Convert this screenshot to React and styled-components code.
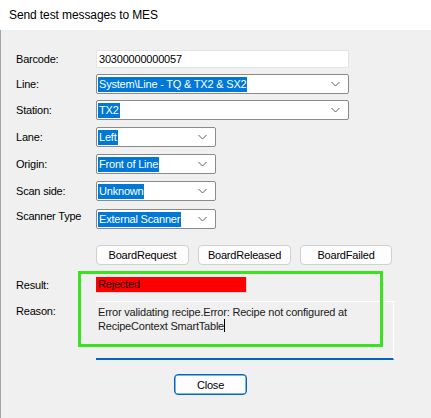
import React from 'react'
import styled, { createGlobalStyle } from 'styled-components'

const GlobalStyle = createGlobalStyle`
  html, body {
    margin: 0;
    padding: 0;
    background: #f0f0f0;
  }
  body {
    font-family: "Liberation Sans", Arial, sans-serif;
    font-size: 11px;
    letter-spacing: -0.2px;
    color: #000000;
  }
`

const Window = styled.div`
  width: 431px;
  height: 418px;
  display: flex;
  flex-direction: column;
  overflow: hidden;
`

const TitleBar = styled.div`
  height: 30px;
  flex-shrink: 0;
  background: #ffffff;
  display: flex;
  align-items: center;
  padding-left: 9px;
  font-size: 12px;
  letter-spacing: -0.1px;
  color: #000000;
`

const Body = styled.div`
  flex: 1;
  position: relative;
  background: #f0f0f0;
  border-left: 1px solid #a3a3a3;
  padding: 20px 0 0 15px;
  display: flex;
  flex-direction: column;
`

const Row = styled.div`
  display: flex;
  align-items: ${p => p.$top ? 'flex-start' : 'center'};
  margin-top: ${p => p.$gap || 0}px;
  height: ${p => p.$h}px;
`

const Label = styled.div`
  width: 80px;
  flex-shrink: 0;
  line-height: 14px;
  position: relative;
  top: ${p => p.$shift || 0}px;
`

const TextBox = styled.div`
  box-sizing: border-box;
  width: 253px;
  height: 18px;
  background: #ffffff;
  border: 1px solid #e4e4e4;
  display: flex;
  align-items: center;
  padding-left: 2px;
  line-height: 14px;
`

const Combo = styled.div`
  box-sizing: border-box;
  width: ${p => p.$w}px;
  height: 20px;
  background: #ffffff;
  border: 1px solid #8a8a8a;
  border-radius: 2px;
  display: flex;
  align-items: center;
  padding-left: 1px;
  padding-right: 8px;
  justify-content: space-between;
`

const Selected = styled.span`
  background: #0078d7;
  color: #ffffff;
  line-height: 15px;
  padding: 0 1px;
  white-space: nowrap;
`

const Chevron = () => (
  <svg width="9" height="6" viewBox="0 0 9 6">
    <path d="M0.5 1 L4.5 5 L8.5 1" fill="none" stroke="#5f5f5f" strokeWidth="1" />
  </svg>
)

const ButtonBar = styled.div`
  display: flex;
  gap: 9px;
  margin-left: 80px;
`

const Button = styled.button`
  box-sizing: border-box;
  width: ${p => p.$w || 93}px;
  height: ${p => p.$h || 20}px;
  margin-left: ${p => p.$offset || 0}px;
  background: #fdfdfd;
  border: 1px solid ${p => p.$primary ? '#0067c0' : '#d0d0d0'};
  box-shadow: ${p => p.$primary ? 'inset 0 0 0 0.5px #0067c0' : 'none'};
  border-radius: 4px;
  font-family: inherit;
  font-size: 11px;
  letter-spacing: -0.2px;
  color: #000000;
  padding: 0;
  line-height: 14px;
`

const ResultField = styled.div`
  box-sizing: border-box;
  width: 151px;
  height: 16px;
  background: #ff0000;
  border-right: 1px solid #d7d7d7;
  border-bottom: 1px solid #d7d7d7;
  padding-left: 2px;
  line-height: 15px;
  color: #1a0000;
`

const ReasonBox = styled.div`
  box-sizing: border-box;
  width: 298px;
  height: 59px;
  background: #f0f0f0;
  border-top: 1px solid #ffffff;
  border-right: 1px solid #ffffff;
  border-bottom: 2px solid #0067c0;
  padding: 4px 8px 0 2px;
  line-height: 13px;
  color: #1a1a1a;
`

const Caret = styled.span`
  display: inline-block;
  width: 1px;
  height: 13px;
  background: #000000;
  vertical-align: -2px;
`

const Highlight = styled.div`
  position: absolute;
  left: 77px;
  top: 241px;
  width: 305px;
  height: 76px;
  box-sizing: border-box;
  border: 3px solid #3ce11f;
  pointer-events: none;
`

const combos = [
  { label: 'Line:', value: 'System\\Line - TQ & TX2 & SX2', w: 253, gap: 6 },
  { label: 'Station:', value: 'TX2', w: 253, gap: 6 },
  { label: 'Lane:', value: 'Left', w: 120, gap: 7 },
  { label: 'Origin:', value: 'Front of Line', w: 120, gap: 7 },
  { label: 'Scan side:', value: 'Unknown', w: 120, gap: 7 },
  { label: 'Scanner Type', value: 'External Scanner', w: 120, gap: 8, shift: -3 }
]

export default function App () {
  return (
    <Window>
      <GlobalStyle />
      <TitleBar>Send test messages to MES</TitleBar>
      <Body>
        <Row $h={18}>
          <Label>Barcode:</Label>
          <TextBox>30300000000057</TextBox>
        </Row>
        {combos.map(c => (
          <Row key={c.label} $h={20} $gap={c.gap}>
            <Label $shift={c.shift}>{c.label}</Label>
            <Combo $w={c.w}>
              <Selected>{c.value}</Selected>
              <Chevron />
            </Combo>
          </Row>
        ))}
        <Row $h={20} $gap={16}>
          <ButtonBar>
            <Button>BoardRequest</Button>
            <Button>BoardReleased</Button>
            <Button $w={92}>BoardFailed</Button>
          </ButtonBar>
        </Row>
        <Row $h={16} $gap={12}>
          <Label>Result:</Label>
          <ResultField>Rejected</ResultField>
        </Row>
        <Row $h={59} $gap={8} $top>
          <Label $shift={3}>Reason:</Label>
          <ReasonBox>
            Error validating recipe.Error: Recipe not configured at RecipeContext SmartTable<Caret />
          </ReasonBox>
        </Row>
        <Row $h={21} $gap={14}>
          <Button $primary $w={73} $h={21} $offset={158}>Close</Button>
        </Row>
        <Highlight />
      </Body>
    </Window>
  )
}
